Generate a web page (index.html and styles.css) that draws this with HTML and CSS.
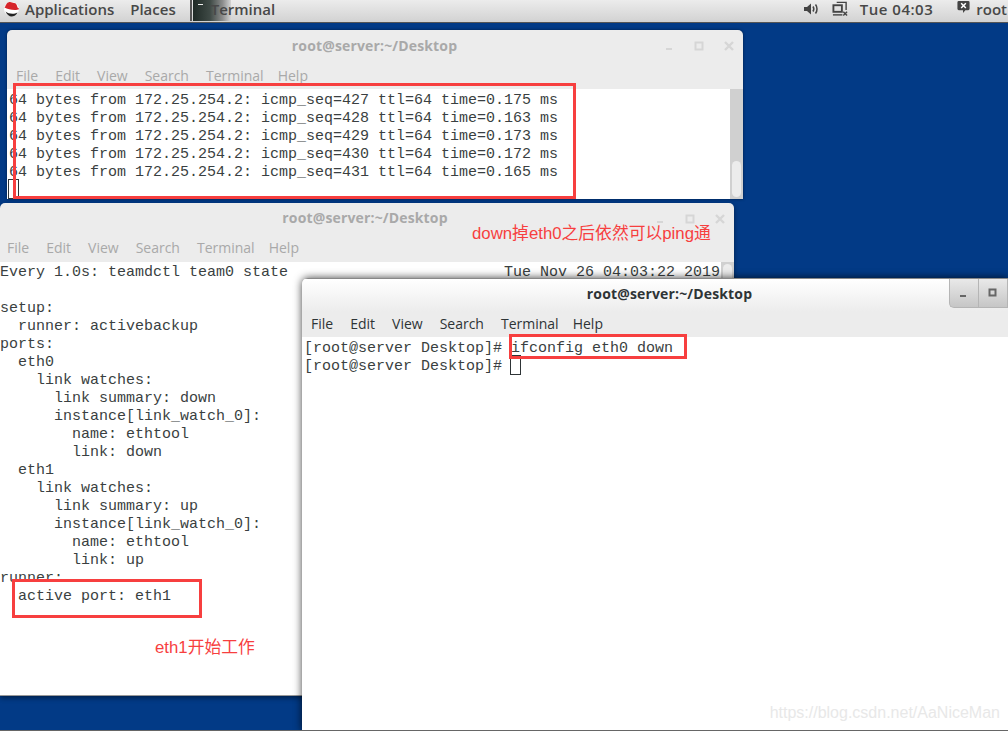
FILE: index.html
```html
<!DOCTYPE html>
<html lang="en">
<head>
<meta charset="utf-8">
<title>Terminal</title>
<link rel="stylesheet" href="styles.css">
</head>
<body>
<div class="desktop">
  <header class="topbar">
    <div class="topbar-left">
      <svg class="hat" width="17" height="16" viewBox="0 0 17 16"><ellipse cx="8.500" cy="8" rx="7.500" ry="7" fill="#fff"/><path d="M1.500 7.500C3 3 4.500 1 7 1c1.500 0 2.500 1 4 1 2 0 3 2 3.500 4.500 1 .5 1.500 1.200 1.500 1.800-3 1.500-11 .5-14.500-1.800z" fill="#d6242a"/><path d="M2.500 10.500c3 2.500 8.500 3 12 1-1.500 3-4 4-6 4s-4.500-1.500-6-5z" fill="#222"/></svg>
      <span class="app-menu">Applications</span>
      <span class="places">Places</span>
      <div class="task">
        <div class="task-thumb"><span class="task-prompt"></span></div>
        <span class="task-label">Terminal</span>
      </div>
    </div>
    <div class="topbar-right">
      <svg class="tray-vol" width="16" height="14" viewBox="0 0 16 14"><path d="M1 5h3l4-3.500v11L4 9H1z" fill="#444"/><path d="M10 4.500c1 1.500 1 3.500 0 5M12.500 2.500c2 2.500 2 6.500 0 9" fill="none" stroke="#444" stroke-width="1.500"/></svg>
      <svg class="tray-net" width="16" height="16" viewBox="0 0 17 17"><path d="M5 1.500h10v8" fill="none" stroke="#444" stroke-width="1.500"/><rect x="1.500" y="4.500" width="9" height="7" fill="none" stroke="#444" stroke-width="2"/><path d="M1 14h10v1.500H1z" fill="#444"/><path d="M12 11.500l4 4M16 11.500l-4 4" stroke="#444" stroke-width="1.500"/></svg>
      <span class="clock">Tue 04:03</span>
      <svg class="tray-user" width="15" height="14" viewBox="0 0 15 15"><path d="M2.500 1h10A1.500 1.500 0 0 1 14 2.500v7a1.500 1.500 0 0 1-1.500 1.500H9.500L7 14v-3H2.500A1.500 1.500 0 0 1 1 9.500v-7A1.500 1.500 0 0 1 2.500 1z" fill="#444"/><path d="M5 3.500l5 5M10 3.500l-5 5" stroke="#fff" stroke-width="1.600"/></svg>
      <span class="user">root</span>
    </div>
  </header>

  <section class="win win-ping">
    <div class="titlebar">
      <span class="title">root@server:~/Desktop</span>
      <div class="controls">
        <svg width="12" height="12" viewBox="0 0 12 12"><rect x="3" y="8" width="6" height="2" fill="#d6d6d6"/></svg>
        <svg width="12" height="12" viewBox="0 0 12 12"><path d="M2.500 2.500h7v7h-7z" fill="none" stroke="#d6d6d6" stroke-width="2"/></svg>
        <svg width="12" height="12" viewBox="0 0 12 12"><path d="M2 2l8 8M10 2l-8 8" stroke="#d6d6d6" stroke-width="2.400"/></svg>
      </div>
    </div>
    <nav class="menubar"><span>File</span><span>Edit</span><span>View</span><span>Search</span><span>Terminal</span><span class="help">Help</span></nav>
    <div class="term-wrap">
      <pre class="term">64 bytes from 172.25.254.2: icmp_seq=427 ttl=64 time=0.175 ms
64 bytes from 172.25.254.2: icmp_seq=428 ttl=64 time=0.163 ms
64 bytes from 172.25.254.2: icmp_seq=429 ttl=64 time=0.173 ms
64 bytes from 172.25.254.2: icmp_seq=430 ttl=64 time=0.172 ms
64 bytes from 172.25.254.2: icmp_seq=431 ttl=64 time=0.165 ms
<span class="cursor"></span></pre>
      <div class="scrollbar"><div class="thumb thumb-ping"></div></div>
    </div>
  </section>

  <section class="win win-watch">
    <div class="titlebar">
      <span class="title">root@server:~/Desktop</span>
      <div class="controls">
        <svg width="12" height="12" viewBox="0 0 12 12"><rect x="3" y="8" width="6" height="2" fill="#d6d6d6"/></svg>
        <svg width="12" height="12" viewBox="0 0 12 12"><path d="M2.500 2.500h7v7h-7z" fill="none" stroke="#d6d6d6" stroke-width="2"/></svg>
        <svg width="12" height="12" viewBox="0 0 12 12"><path d="M2 2l8 8M10 2l-8 8" stroke="#d6d6d6" stroke-width="2.400"/></svg>
      </div>
    </div>
    <nav class="menubar"><span>File</span><span>Edit</span><span>View</span><span>Search</span><span>Terminal</span><span class="help">Help</span></nav>
    <div class="term-wrap">
      <pre class="term">Every 1.0s: teamdctl team0 state                        Tue Nov 26 04:03:22 2019

setup:
  runner: activebackup
ports:
  eth0
    link watches:
      link summary: down
      instance[link_watch_0]:
        name: ethtool
        link: down
  eth1
    link watches:
      link summary: up
      instance[link_watch_0]:
        name: ethtool
        link: up
runner:
  active port: eth1</pre>
      <div class="scrollbar"><div class="thumb thumb-watch"></div></div>
    </div>
  </section>

  <section class="win win-front">
    <div class="titlebar">
      <span class="title">root@server:~/Desktop</span>
      <div class="controls-active">
        <div class="ctl"><svg width="10" height="10" viewBox="0 0 10 10"><rect x="1" y="7" width="6" height="2" fill="#666"/></svg></div>
        <div class="ctl"><svg width="10" height="10" viewBox="0 0 10 10"><path d="M1.500 1.500h6v6h-6z" fill="none" stroke="#666" stroke-width="2"/></svg></div>
      </div>
    </div>
    <nav class="menubar"><span>File</span><span>Edit</span><span>View</span><span>Search</span><span>Terminal</span><span class="help">Help</span></nav>
    <pre class="term">[root@server Desktop]# ifconfig eth0 down
[root@server Desktop]# <span class="cursor"></span></pre>
  </section>

  <div class="mark mark-ping"></div>
  <div class="mark mark-port"></div>
  <div class="mark mark-cmd"></div>
  <span class="note note-ping">down掉eth0之后依然可以ping通</span>
  <span class="note note-port">eth1开始工作</span>
  <span class="watermark">https://blog.csdn.net/AaNiceMan</span>
</div>
</body>
</html>
```
FILE: styles.css
```css
html, body {
  margin: 0;
  padding: 0;
}
.desktop {
  position: relative;
  width: 1008px;
  height: 731px;
  overflow: hidden;
  background: #023a86;
  font-family: "Open Sans", "Noto Sans", sans-serif;
}
.desktop::after {
  content: "";
  position: absolute;
  left: 0;
  right: 0;
  bottom: 0;
  height: 1px;
  background: #666;
  z-index: 9;
}
.topbar {
  display: flex;
  justify-content: space-between;
  align-items: flex-start;
  box-sizing: border-box;
  height: 23px;
  background: linear-gradient(#ececec, #d2d2d2);
  border-bottom: 1px solid #555;
  color: #484848;
  font-size: 15px;
  font-weight: 600;
  line-height: 19px;
}
.topbar-left, .topbar-right {
  display: flex;
  align-items: flex-start;
  height: 22px;
}
.hat {
  margin: 1px 0 0 3px;
}
.app-menu {
  margin-left: 5px;
}
.places {
  margin-left: 16px;
}
.task {
  display: flex;
  margin-left: 14px;
  height: 21px;
  border-left: 2px solid #555;
  padding-left: 1px;
}
.task-thumb {
  position: relative;
  flex: none;
  width: 38px;
  height: 21px;
  background: linear-gradient(90deg, #1f2a26 0, #3f4a46 45%, #8d8d8d 78%, #d4d4d4 100%);
}
.task-prompt {
  position: absolute;
  left: 5px;
  top: 4px;
  width: 5px;
  height: 1px;
  background: #eee;
}
.task-label {
  margin-left: -20px;
  position: relative;
}
.topbar-right {
  padding-right: 1px;
}
.tray-vol {
  margin: 2px 13px 0 0;
}
.tray-net {
  margin: 1px 12px 0 0;
}
.clock {
  margin-right: 23px;
  letter-spacing: .5px;
}
.tray-user {
  margin: 0 5px 0 0;
}
.win {
  position: absolute;
  display: flex;
  flex-direction: column;
  background: #ececec;
  border-radius: 5px 5px 0 0;
  overflow: hidden;
}
.win-ping {
  left: 7px;
  top: 30px;
  width: 736px;
  height: 169px;
  box-shadow: 0 0 3px rgba(0,0,0,.5);
}
.win-watch {
  left: 0;
  top: 203px;
  width: 734px;
  height: 492px;
  border-bottom: 1px solid #999;
  box-shadow: 0 2px 5px rgba(0,0,0,.45);
}
.win-front {
  left: 302px;
  top: 278px;
  width: 706px;
  height: 453px;
  box-shadow: 0 0 8px rgba(0,0,0,.75);
  border-radius: 6px 0 0 0;
}
.titlebar {
  position: relative;
  display: flex;
  justify-content: center;
  align-items: center;
  box-sizing: border-box;
  height: 37px;
  flex: none;
  padding-bottom: 6px;
}
.win-watch .titlebar {
  padding-bottom: 8px;
}
.title {
  font-size: 14px;
  font-weight: 700;
  letter-spacing: .15px;
  color: #a9a9a9;
}
.win-ping .title {
  margin-right: 1px;
}
.win-watch .title {
  margin-right: 4px;
}
.controls {
  position: absolute;
  right: 8px;
  top: 10px;
  display: flex;
  gap: 18px;
}
.menubar {
  display: flex;
  align-items: center;
  gap: 17px;
  flex: none;
  box-sizing: border-box;
  height: 22px;
  padding: 0 0 6px 9px;
  font-size: 14px;
  color: #a9a9a9;
  background: #ececec;
}
.help {
  margin-left: -3px;
}
.win-watch .menubar {
  padding: 0 0 8px 7px;
}
.term-wrap {
  display: flex;
  flex: 1;
  min-height: 0;
  background: #fff;
}
.term {
  flex: 1;
  margin: 0;
  padding: 3px 0 0 2px;
  font-family: "Liberation Mono", monospace;
  font-size: 15px;
  line-height: 18px;
  color: #3a3f41;
  background: #fff;
  overflow: hidden;
}
.win-watch .term {
  padding: 2px 0 0;
}
.cursor {
  display: inline-block;
  box-sizing: border-box;
  width: 11px;
  height: 20px;
  margin: -3px 0 0 -1px;
  border: 1px solid #2e3436;
  vertical-align: top;
}
.scrollbar {
  position: relative;
  flex: none;
  width: 13px;
  background: #d0d0d0;
}
.thumb {
  position: absolute;
  left: 2px;
  right: 2px;
  background: #ececec;
  border-radius: 5px;
}
.thumb-ping {
  top: 72px;
  height: 36px;
}
.thumb-watch {
  top: 2px;
  height: 20px;
}
.win-front .titlebar {
  height: 34px;
  padding: 0 0 4px 29px;
  background: linear-gradient(#fff, #ececec);
  border-top: 1px solid #888;
}
.win-front .title {
  color: #2e3436;
}
.win-front .menubar {
  height: 25px;
  color: #2e3436;
  padding: 0 0 2px 9px;
}
.controls-active {
  position: absolute;
  right: 0;
  top: 0;
  display: flex;
  height: 28px;
  border-bottom-left-radius: 5px;
  background: linear-gradient(#e9e9e9, #c6c6c6);
  border: 1px solid #b5b5b5;
  border-top: 0;
  border-right: 0;
}
.ctl {
  display: flex;
  align-items: center;
  justify-content: center;
  width: 28px;
  border-right: 1px solid #b5b5b5;
}
.mark {
  position: absolute;
  box-sizing: border-box;
  border: 3px solid #f73f3f;
  z-index: 5;
}
.mark-ping {
  left: 13px;
  top: 83px;
  width: 563px;
  height: 116px;
}
.mark-port {
  left: 12px;
  top: 579px;
  width: 190px;
  height: 39px;
}
.mark-cmd {
  left: 509px;
  top: 334px;
  width: 178px;
  height: 25px;
}
.note {
  position: absolute;
  z-index: 5;
  font-family: "Liberation Sans", "Noto Sans CJK SC", sans-serif;
  font-size: 16.800px;
  color: #f73f3f;
  white-space: nowrap;
}
.note-ping {
  left: 472px;
  top: 220px;
}
.note-port {
  left: 155px;
  top: 634px;
}
.watermark {
  position: absolute;
  right: 8px;
  top: 704px;
  z-index: 5;
  font-family: "Liberation Sans", sans-serif;
  font-size: 16px;
  color: #e8e8e8;
  white-space: nowrap;
}
```
